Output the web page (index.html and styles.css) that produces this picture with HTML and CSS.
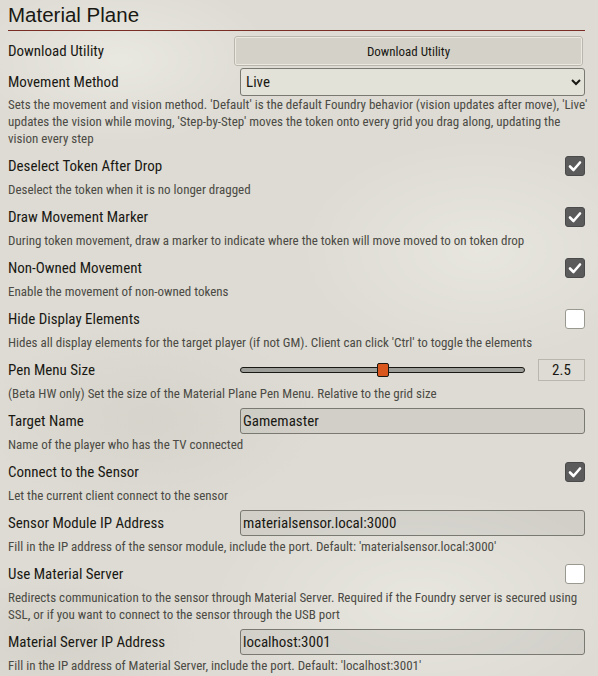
FILE: index.html
```html
<!DOCTYPE html>
<html>
<head>
<meta charset="utf-8">
<link rel="stylesheet" href="styles.css">
</head>
<body>
<div class="panel">
  <h2 class="title">Material Plane</h2>

  <div class="group g-download">
    <div class="row">
      <label class="lbl">Download Utility</label>
      <div class="fields"><button class="btn">Download Utility</button></div>
    </div>
  </div>

  <div class="group g-select">
    <div class="row">
      <label class="lbl">Movement Method</label>
      <div class="fields">
        <select class="sel"><option>Live</option><option>Default</option><option>Step-by-Step</option></select>
      </div>
    </div>
    <p class="hint tight">Sets the movement and vision method. 'Default' is the default Foundry behavior (vision updates after move), 'Live' updates the vision while moving, 'Step-by-Step' moves the token onto every grid you drag along, updating the vision every step</p>
  </div>

  <div class="group">
    <div class="row">
      <label class="lbl">Deselect Token After Drop</label>
      <div class="fields end"><span class="cb on"><svg viewBox="0 0 20 20" width="20" height="20"><path d="M5 10.5 L8.5 14 L15 6.5" fill="none" stroke="#fff" stroke-width="2.6" stroke-linecap="round" stroke-linejoin="round"/></svg></span></div>
    </div>
    <p class="hint">Deselect the token when it is no longer dragged</p>
  </div>

  <div class="group">
    <div class="row">
      <label class="lbl">Draw Movement Marker</label>
      <div class="fields end"><span class="cb on"><svg viewBox="0 0 20 20" width="20" height="20"><path d="M5 10.5 L8.5 14 L15 6.5" fill="none" stroke="#fff" stroke-width="2.6" stroke-linecap="round" stroke-linejoin="round"/></svg></span></div>
    </div>
    <p class="hint">During token movement, draw a marker to indicate where the token will move moved to on token drop</p>
  </div>

  <div class="group">
    <div class="row">
      <label class="lbl">Non-Owned Movement</label>
      <div class="fields end"><span class="cb on"><svg viewBox="0 0 20 20" width="20" height="20"><path d="M5 10.5 L8.5 14 L15 6.5" fill="none" stroke="#fff" stroke-width="2.6" stroke-linecap="round" stroke-linejoin="round"/></svg></span></div>
    </div>
    <p class="hint">Enable the movement of non-owned tokens</p>
  </div>

  <div class="group">
    <div class="row">
      <label class="lbl">Hide Display Elements</label>
      <div class="fields end"><span class="cb"></span></div>
    </div>
    <p class="hint">Hides all display elements for the target player (if not GM). Client can click 'Ctrl' to toggle the elements</p>
  </div>

  <div class="group">
    <div class="row">
      <label class="lbl">Pen Menu Size</label>
      <div class="fields range-fields">
        <input class="range" type="range" min="0" max="5" step="0.1" value="2.5">
        <span class="range-val">2.5</span>
      </div>
    </div>
    <p class="hint">(Beta HW only) Set the size of the Material Plane Pen Menu. Relative to the grid size</p>
  </div>

  <div class="group">
    <div class="row">
      <label class="lbl">Target Name</label>
      <div class="fields"><input class="txt" type="text" value="Gamemaster"></div>
    </div>
    <p class="hint">Name of the player who has the TV connected</p>
  </div>

  <div class="group">
    <div class="row">
      <label class="lbl">Connect to the Sensor</label>
      <div class="fields end"><span class="cb on"><svg viewBox="0 0 20 20" width="20" height="20"><path d="M5 10.5 L8.5 14 L15 6.5" fill="none" stroke="#fff" stroke-width="2.6" stroke-linecap="round" stroke-linejoin="round"/></svg></span></div>
    </div>
    <p class="hint">Let the current client connect to the sensor</p>
  </div>

  <div class="group">
    <div class="row">
      <label class="lbl">Sensor Module IP Address</label>
      <div class="fields"><input class="txt" type="text" value="materialsensor.local:3000"></div>
    </div>
    <p class="hint">Fill in the IP address of the sensor module, include the port. Default: 'materialsensor.local:3000'</p>
  </div>

  <div class="group">
    <div class="row">
      <label class="lbl">Use Material Server</label>
      <div class="fields end"><span class="cb"></span></div>
    </div>
    <p class="hint">Redirects communication to the sensor through Material Server. Required if the Foundry server is secured using SSL, or if you want to connect to the sensor through the USB port</p>
  </div>

  <div class="group">
    <div class="row">
      <label class="lbl">Material Server IP Address</label>
      <div class="fields"><input class="txt" type="text" value="localhost:3001"></div>
    </div>
    <p class="hint">Fill in the IP address of Material Server, include the port. Default: 'localhost:3001'</p>
  </div>
</div>
</body>
</html>
```

FILE: styles.css
```css
html, body {
  margin: 0;
  padding: 0;
  height: 100%;
}
body {
  background-color: #dddbd3;
  background-image:
    radial-gradient(ellipse 220px 120px at 120px 60px, rgba(255,255,250,0.35), rgba(255,255,250,0) 70%),
    radial-gradient(ellipse 260px 160px at 480px 250px, rgba(255,255,250,0.3), rgba(255,255,250,0) 70%),
    radial-gradient(ellipse 240px 140px at 150px 420px, rgba(190,188,178,0.25), rgba(190,188,178,0) 70%),
    radial-gradient(ellipse 300px 160px at 420px 600px, rgba(255,255,250,0.3), rgba(255,255,250,0) 70%),
    radial-gradient(ellipse 200px 100px at 60px 640px, rgba(190,188,178,0.3), rgba(190,188,178,0) 70%);
  font-family: "Roboto Condensed", "Roboto", sans-serif;
  color: #191813;
  overflow: hidden;
}
.panel {
  padding: 0 13px 0 8px;
}
.title {
  margin: 0;
  font-family: "Liberation Sans", sans-serif;
  font-size: 20.5px;
  font-weight: normal;
  line-height: 30px;
  height: 30px;
  border-bottom: 1px solid #782e22;
  color: #191813;
}
.group {
  margin-top: 6px;
}
.g-download { margin-top: 5px; }
.g-select { margin-top: 2px; }
.row {
  display: flex;
  align-items: center;
  min-height: 26px;
}
.lbl {
  width: 232px;
  flex: none;
  font-size: 15px;
  line-height: 18px;
}
.fields {
  flex: 1;
  display: flex;
  align-items: center;
}
.fields.end {
  justify-content: flex-end;
}
.hint {
  margin: 2px -6px 0 0;
  font-size: 13px;
  line-height: 17px;
  color: #4b4a44;
}
.hint.tight { margin-top: 0; }

.btn {
  margin-left: -6px;
  width: calc(100% + 4px);
  height: 30px;
  font-family: inherit;
  font-size: 13px;
  color: #191813;
  background: #d3d1c8;
  border: 2px solid #eae8df;
  outline: 1px solid #b9b7ad;
  outline-offset: -1px;
  border-radius: 3px;
  padding: 0;
}
.sel {
  width: 100%;
  height: 28px;
  font-family: inherit;
  font-size: 15px;
  color: #191813;
  background: rgba(255,255,245,0.2);
  border: 1px solid #7a7971;
  border-radius: 3px;
  padding: 0 1px;
}
.txt {
  width: 100%;
  height: 26px;
  box-sizing: border-box;
  font-family: inherit;
  font-size: 15px;
  color: #191813;
  background: rgba(0,0,0,0.05);
  border: 1px solid #7a7971;
  border-radius: 3px;
  padding: 0 2px;
  margin: 0;
}
.cb {
  width: 20px;
  height: 20px;
  box-sizing: border-box;
  border-radius: 3px;
  background: #fff;
  border: 1px solid #9a9990;
  display: block;
}
.cb.on {
  background: #5b5b5b;
  border-color: #4a4a4a;
}
.cb svg {
  display: block;
  margin: -1px;
}
.range-fields {
  gap: 13px;
}
.range {
  -webkit-appearance: none;
  appearance: none;
  flex: 1;
  margin: 0;
  height: 16px;
  background: transparent;
}
.range::-webkit-slider-runnable-track {
  height: 6px;
  box-sizing: border-box;
  background: #9d9d9a;
  border: 1.5px solid #191813;
  border-radius: 3px;
}
.range::-webkit-slider-thumb {
  -webkit-appearance: none;
  width: 12px;
  height: 14px;
  margin-top: -5.5px;
  box-sizing: border-box;
  background: #d9561c;
  border: 1px solid #191813;
  border-radius: 2px;
}
.range-val {
  width: 47px;
  height: 22px;
  box-sizing: border-box;
  border: 1px solid #b9b7ad;
  font-size: 15px;
  line-height: 20px;
  text-align: center;
  flex: none;
}
```
